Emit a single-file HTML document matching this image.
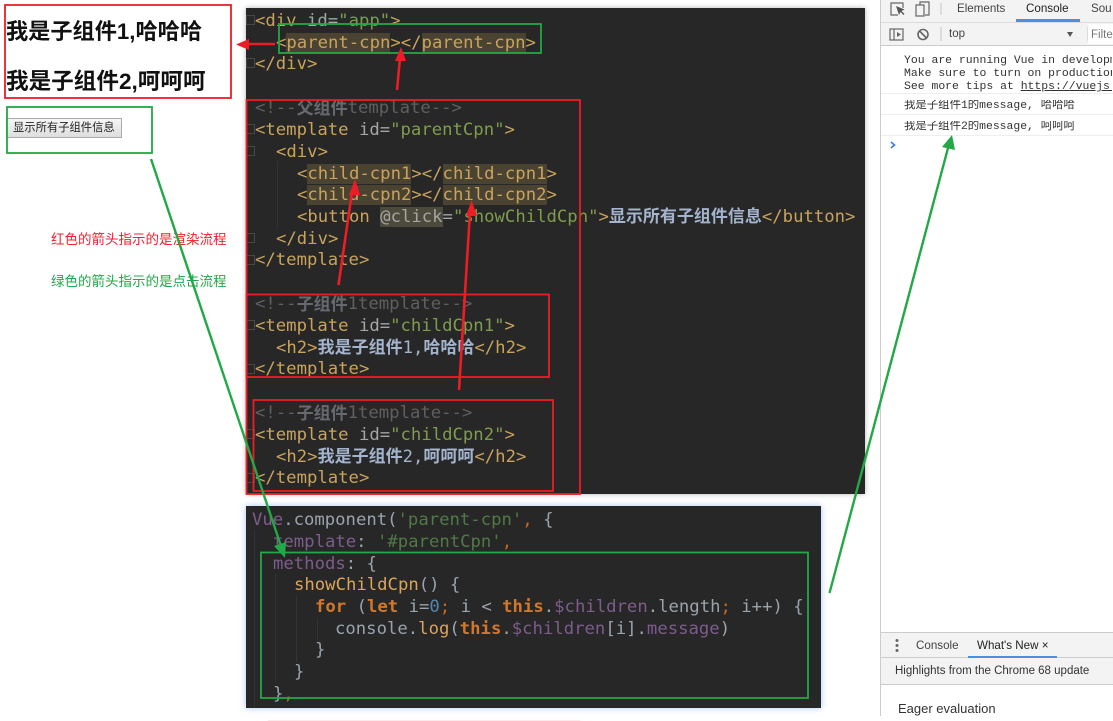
<!DOCTYPE html>
<html lang="zh">
<head>
<meta charset="utf-8">
<style>
html,body{margin:0;padding:0;width:1113px;height:721px;overflow:hidden;background:#fff;}
body{position:relative;font-family:"Liberation Sans","Noto Sans CJK SC",sans-serif;}
.abs{position:absolute;white-space:pre;}
.panel{position:absolute;background:#272727;}
.l{position:absolute;white-space:pre;font-family:"DejaVu Sans Mono","Liberation Mono",monospace;font-size:17.28px;line-height:22px;height:22px;margin-top:1px;color:#c9a35c;}
.c{display:inline-block;vertical-align:top;position:relative;top:-2px;height:22px;font-family:"Noto Sans CJK SC",sans-serif;font-size:17px;font-weight:700;color:#a3b4cc;line-height:22px;}
.cm{color:#5f5f5f}.cm .c{color:#666a70;top:-1px}
.s{color:#7f9c4e}.a{color:#a5a5a5}
.h{background:#4a4332}
.h2{background:#4c4a3a;color:#a5a5a5}
.p{color:#7d5c8c}.g{color:#4f7a45}.w{color:#9aa3ad}.o{color:#d2772a;font-weight:700}.y{color:#d9a45c}.n{color:#4f87b0}.sc{color:#c46a20}
.fold{position:absolute;width:9px;height:10px;border:1px solid #474747;box-sizing:border-box;left:246px;}
.guide{position:absolute;width:1px;background:#333;}
.dv{position:absolute;font-family:"Liberation Sans",sans-serif;font-size:11.6px;color:#444;white-space:pre;}
.con{position:absolute;left:904px;width:208px;overflow:hidden;font-family:"Liberation Mono","Noto Sans CJK SC",monospace;font-size:11.45px;line-height:13px;color:#333;white-space:pre;}
</style>
</head>
<body>

<!-- left preview -->
<div class="abs" style="left:6px;top:16px;font-size:22.2px;font-weight:700;color:#111;line-height:32px;">我是子组件1,哈哈哈</div>
<div class="abs" style="left:6px;top:66px;font-size:22.6px;font-weight:700;color:#111;line-height:32px;">我是子组件2,呵呵呵</div>
<div class="abs" style="left:6px;top:118px;width:116px;height:20px;box-sizing:border-box;background:linear-gradient(#f6f6f6,#dedede);border:1px solid #aaa;font-size:11.3px;line-height:18px;color:#222;padding-left:6px;">显示所有子组件信息</div>
<div class="abs" style="left:51px;top:231px;font-size:13.5px;line-height:18px;color:#f0202c;">红色的箭头指示的是渲染流程</div>
<div class="abs" style="left:51px;top:273px;font-size:13.5px;line-height:18px;color:#22a846;">绿色的箭头指示的是点击流程</div>

<!-- top code panel -->
<div class="panel" style="left:246px;top:8px;width:619px;height:486px;box-shadow:0 0 5px rgba(0,0,0,.3);"></div>
<div class="fold" style="top:15px"></div>
<div class="fold" style="top:58px"></div>
<div class="fold" style="top:124px"></div>
<div class="fold" style="top:146px"></div>
<div class="fold" style="top:233px"></div>
<div class="fold" style="top:255px"></div>
<div class="fold" style="top:320px"></div>
<div class="fold" style="top:364px"></div>
<div class="fold" style="top:429px"></div>
<div class="fold" style="top:473px"></div>
<div class="guide" style="left:277px;top:161px;height:66px"></div>

<div class="l" style="left:255px;top:9px">&lt;div <span class="a">id=</span><span class="s">"app"</span>&gt;</div>
<div class="l" style="left:276px;top:31px">&lt;<span class="h">parent-cpn</span>&gt;&lt;/<span class="h">parent-cpn</span>&gt;</div>
<div class="l" style="left:255px;top:52px">&lt;/div&gt;</div>
<div class="l cm" style="left:255px;top:96px">&lt;!--<span class="c" style="width:51px">父组件</span>template--&gt;</div>
<div class="l" style="left:255px;top:118px">&lt;template <span class="a">id=</span><span class="s">"parentCpn"</span>&gt;</div>
<div class="l" style="left:276px;top:140px">&lt;div&gt;</div>
<div class="l" style="left:297px;top:162px">&lt;<span class="h">child-cpn1</span>&gt;&lt;/<span class="h">child-cpn1</span>&gt;</div>
<div class="l" style="left:297px;top:183px">&lt;<span class="h">child-cpn2</span>&gt;&lt;/<span class="h">child-cpn2</span>&gt;</div>
<div class="l" style="left:297px;top:205px">&lt;button <span class="h2">@click</span><span class="a">=</span><span class="s">"showChildCpn"</span>&gt;<span class="c" style="width:153px">显示所有子组件信息</span>&lt;/button&gt;</div>
<div class="l" style="left:276px;top:227px">&lt;/div&gt;</div>
<div class="l" style="left:255px;top:248px">&lt;/template&gt;</div>
<div class="l cm" style="left:255px;top:292px">&lt;!--<span class="c" style="width:51px">子组件</span>1template--&gt;</div>
<div class="l" style="left:255px;top:314px">&lt;template <span class="a">id=</span><span class="s">"childCpn1"</span>&gt;</div>
<div class="l" style="left:276px;top:336px">&lt;h2&gt;<span class="c" style="width:85px">我是子组件</span><span style="color:#a3b4cc">1,</span><span class="c" style="width:51px">哈哈哈</span>&lt;/h2&gt;</div>
<div class="l" style="left:255px;top:357px">&lt;/template&gt;</div>
<div class="l cm" style="left:255px;top:401px">&lt;!--<span class="c" style="width:51px">子组件</span>1template--&gt;</div>
<div class="l" style="left:255px;top:423px">&lt;template <span class="a">id=</span><span class="s">"childCpn2"</span>&gt;</div>
<div class="l" style="left:276px;top:445px">&lt;h2&gt;<span class="c" style="width:85px">我是子组件</span><span style="color:#a3b4cc">2,</span><span class="c" style="width:51px">呵呵呵</span>&lt;/h2&gt;</div>
<div class="l" style="left:255px;top:466px">&lt;/template&gt;</div>

<!-- bottom code panel -->
<div class="panel" style="left:246px;top:506px;width:575px;height:202px;box-shadow:0 0 6px rgba(90,150,240,.55);"></div>
<div class="guide" style="left:254px;top:530px;height:178px"></div>
<div class="guide" style="left:275px;top:574px;height:108px"></div>
<div class="guide" style="left:296px;top:596px;height:66px"></div>
<div class="guide" style="left:317px;top:618px;height:22px"></div>
<div class="l w" style="left:252px;top:508px"><span class="p">Vue</span>.component(<span class="g">'parent-cpn'</span><span class="sc">,</span> {</div>
<div class="l w" style="left:273px;top:530px"><span class="p">template</span>: <span class="g">'#parentCpn'</span><span class="sc">,</span></div>
<div class="l w" style="left:273px;top:552px"><span class="p">methods</span>: {</div>
<div class="l w" style="left:294px;top:573px"><span class="y">showChildCpn</span>() {</div>
<div class="l w" style="left:315px;top:595px"><span class="o">for</span> (<span class="o">let</span> i=<span class="n">0</span><span class="sc">;</span> i &lt; <span class="o">this</span>.<span class="p">$children</span>.length<span class="sc">;</span> i++) {</div>
<div class="l w" style="left:335px;top:617px">console.<span class="y">log</span>(<span class="o">this</span>.<span class="p">$children</span>[i].<span class="p">message</span>)</div>
<div class="l w" style="left:315px;top:638px">}</div>
<div class="l w" style="left:294px;top:660px">}</div>
<div class="l w" style="left:273px;top:682px">}<span class="sc">,</span></div>

<!-- faint strip under panel -->
<div class="abs" style="left:268px;top:720px;width:312px;height:1px;background:#fde8ea;"></div>

<!-- devtools -->
<div class="abs" style="left:880px;top:0;width:233px;height:716px;background:#fff;border-left:1px solid #ccc;box-sizing:border-box;"></div>
<div class="abs" style="left:881px;top:0;width:232px;height:22px;background:#f3f3f3;"></div>
<div class="abs" style="left:881px;top:22px;width:232px;height:24px;background:#f3f3f3;border-top:1px solid #ddd;border-bottom:1px solid #ccc;box-sizing:border-box;"></div>
<svg class="abs" style="left:881px;top:0" width="232" height="46" viewBox="0 0 232 46" fill="none" stroke="#666" stroke-width="1.2">
  <path d="M17 15H10V3H22V8"/><path d="M15 6l3 9 1.5-3 3 3 1-1-3-3 3-1.5z" fill="#555" stroke="none"/>
  <rect x="35" y="5" width="8" height="11"/><path d="M39 5V2h9v13h-4"/>
  <path d="M60 3v12" stroke="#ccc"/>
  <rect x="9" y="29" width="13" height="11"/><path d="M13 29v11"/><path d="M16 32l4 2.5-4 2.5z" fill="#666" stroke="none"/>
  <circle cx="42" cy="34.5" r="5" stroke-width="1.6"/><path d="M38.5 31l7 7" stroke-width="1.6"/>
  <path d="M60 27v14M207 27v14" stroke="#ccc"/>
  <path d="M186 32h6l-3 5z" fill="#555" stroke="none"/>
</svg>
<div class="dv" style="left:957px;top:1px;line-height:15px;">Elements</div>
<div class="dv" style="left:1026px;top:1px;line-height:15px;color:#222;">Console</div>
<div class="abs" style="left:1016px;top:19px;width:64px;height:3px;background:#4a90e2;"></div>
<div class="dv" style="left:1091px;top:1px;line-height:15px;">Sou</div>
<div class="dv" style="left:949px;top:27px;line-height:15px;font-size:11.5px;">top</div>
<div class="abs" style="left:1088px;top:24px;width:25px;height:20px;background:#fff;"></div>
<div class="dv" style="left:1091px;top:28px;line-height:15px;font-size:11.5px;color:#777;">Filte</div>

<div class="con" style="top:54px">You are running Vue in developm</div>
<div class="con" style="top:67px">Make sure to turn on production</div>
<div class="con" style="top:80px">See more tips at <u>https://vuejs.</u></div>
<div class="abs" style="left:881px;top:93px;width:232px;height:1px;background:#eee;"></div>
<div class="con" style="top:100px;font-size:11.4px;">我是子组件1的message, 哈哈哈</div>
<div class="abs" style="left:881px;top:114px;width:232px;height:1px;background:#eee;"></div>
<div class="con" style="top:121px;font-size:11.4px;">我是子组件2的message, 呵呵呵</div>
<div class="abs" style="left:881px;top:135px;width:232px;height:1px;background:#eee;"></div>
<svg class="abs" style="left:889px;top:141px" width="8" height="8" viewBox="0 0 8 8" fill="none"><path d="M2 1l3.5 3L2 7" stroke="#3b78e7" stroke-width="1.6"/></svg>

<!-- drawer -->
<div class="abs" style="left:881px;top:632px;width:232px;height:26px;background:#f3f3f3;border-top:1px solid #ccc;border-bottom:1px solid #ccc;box-sizing:border-box;"></div>
<div class="abs" style="left:881px;top:658px;width:232px;height:27px;background:#f3f3f3;border-bottom:1px solid #ccc;box-sizing:border-box;"></div>
<svg class="abs" style="left:893px;top:638px" width="8" height="16" viewBox="0 0 8 16"><circle cx="4" cy="2.5" r="1.5" fill="#666"/><circle cx="4" cy="7.5" r="1.5" fill="#666"/><circle cx="4" cy="12.5" r="1.5" fill="#666"/></svg>
<div class="dv" style="left:916px;top:638px;line-height:15px;">Console</div>
<div class="dv" style="left:977px;top:638px;line-height:15px;color:#222;">What's New ×</div>
<div class="abs" style="left:968px;top:656px;width:89px;height:2px;background:#4a90e2;"></div>
<div class="dv" style="left:895px;top:664px;line-height:15px;color:#333;font-size:11.5px;">Highlights from the Chrome 68 update</div>
<div class="dv" style="left:898px;top:701px;line-height:15px;color:#333;font-size:13px;">Eager evaluation</div>

<!-- annotations -->
<svg class="abs" style="left:0;top:0;pointer-events:none" width="1113" height="721" viewBox="0 0 1113 721" fill="none">
  <g stroke="#ee1c25" stroke-width="1.8">
    <rect x="5" y="5" width="226" height="93"/>
    <rect x="246.500" y="100" width="333.500" height="394"/>
    <rect x="246.500" y="294.500" width="302.500" height="82.500"/>
    <rect x="253.500" y="400" width="299.500" height="91"/>
  </g>
  <g stroke="#22a846" stroke-width="1.8">
    <rect x="7" y="107" width="145" height="46"/>
    <rect x="279" y="24" width="262" height="29"/>
    <rect x="261" y="552.500" width="547" height="145.500"/>
  </g>
  <g stroke="#ee1c25" stroke-width="2.6">
    <path d="M275 44H246"/>
    <path d="M397 90L400 58"/>
    <path d="M338.500 285L352 192"/>
    <path d="M459 390L470 212"/>
  </g>
  <g fill="#ee1c25">
    <path d="M236 44.500L249 39V50z"/>
    <path d="M401 47L406 61H395z"/>
    <path d="M355 179L360 195H349z"/>
    <path d="M471.500 200L477 216H466z"/>
  </g>
  <g stroke="#22a846" stroke-width="2.4">
    <path d="M151 159L281 546"/>
    <path d="M829.500 593L948 148"/>
  </g>
  <g fill="#22a846">
    <path d="M285 558L274 546L286 542z"/>
    <path d="M952 135L955 150L942 147z"/>
  </g>
</svg>
</body>
</html>
